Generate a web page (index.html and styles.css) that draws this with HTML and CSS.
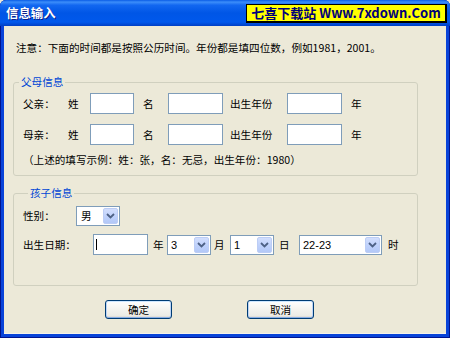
FILE: index.html
```html
<!DOCTYPE html>
<html>
<head>
<meta charset="utf-8">
<title>信息输入</title>
<link rel="stylesheet" href="styles.css">
</head>
<body>
<div class="window">
  <div class="titlebar">
    <span class="title">信息输入</span>
    <span class="brand">七喜下载站 Www.7xdown.Com</span>
  </div>
  <div class="client">
    <p class="note">注意：下面的时间都是按照公历时间。年份都是填四位数，例如1981，2001。</p>

    <fieldset class="group g1">
      <legend>父母信息</legend>
      <div class="pgrid">
        <span class="lbl">父亲：</span>
        <span class="lbl">姓</span>
        <div class="field"></div>
        <span class="lbl pl9">名</span>
        <div class="field"></div>
        <span class="lbl pl7">出生年份</span>
        <div class="field"></div>
        <span class="lbl pl9">年</span>

        <span class="lbl">母亲：</span>
        <span class="lbl">姓</span>
        <div class="field"></div>
        <span class="lbl pl9">名</span>
        <div class="field"></div>
        <span class="lbl pl7">出生年份</span>
        <div class="field"></div>
        <span class="lbl pl9">年</span>
      </div>
      <p class="example">（上述的填写示例：姓：张，名：无忌，出生年份：1980）</p>
    </fieldset>

    <fieldset class="group g2">
      <legend>孩子信息</legend>
      <div class="crow">
        <span class="lbl w-sex">性别：</span>
        <div class="combo w44"><span class="val cjk">男</span><span class="dd"><svg width="9" height="6" viewBox="0 0 9 6"><polyline points="1,1 4.5,4.5 8,1" fill="none" stroke="#4D6185" stroke-width="1.8"/></svg></span></div>
      </div>
      <div class="crow r2">
        <span class="lbl w-birth">出生日期：</span>
        <div class="field"><span class="caret"></span></div>
        <span class="lbl w-nian">年</span>
        <div class="combo w44"><span class="val">3</span><span class="dd"><svg width="9" height="6" viewBox="0 0 9 6"><polyline points="1,1 4.5,4.5 8,1" fill="none" stroke="#4D6185" stroke-width="1.8"/></svg></span></div>
        <span class="lbl w-yue">月</span>
        <div class="combo w44"><span class="val">1</span><span class="dd"><svg width="9" height="6" viewBox="0 0 9 6"><polyline points="1,1 4.5,4.5 8,1" fill="none" stroke="#4D6185" stroke-width="1.8"/></svg></span></div>
        <span class="lbl w-ri">日</span>
        <div class="combo w83"><span class="val">22-23</span><span class="dd"><svg width="9" height="6" viewBox="0 0 9 6"><polyline points="1,1 4.5,4.5 8,1" fill="none" stroke="#4D6185" stroke-width="1.8"/></svg></span></div>
        <span class="lbl w-shi">时</span>
      </div>
    </fieldset>

    <div class="buttons">
      <button class="btn ok">确定</button>
      <button class="btn cancel">取消</button>
    </div>
  </div>
</div>
</body>
</html>
```

FILE: styles.css
```css
* { box-sizing: border-box; }
html, body {
  margin: 0;
  padding: 0;
  background: #ECE9D8;
}
body {
  font-family: "Noto Sans CJK SC", "Liberation Sans", sans-serif;
  font-size: 10.6px;
  color: #000;
}
.window {
  width: 450px;
  height: 338px;
  display: flex;
  flex-direction: column;
  background: #0843D9;
  border-radius: 6px 6px 0 0;
  box-shadow: inset 0 0 0 1px #00148E;
  overflow: hidden;
}
.titlebar {
  height: 26px;
  flex: none;
  display: flex;
  align-items: center;
  padding-left: 6px;
  background: linear-gradient(to bottom, #0A5CE6 0%, #3C8EFA 8%, #1267F0 20%, #0056E6 50%, #0058EC 85%, #003FC4 100%);
}
.title {
  color: #fff;
  font-weight: bold;
  font-size: 12.4px;
  text-shadow: 1px 1px 0 #0A1E8A;
}
.brand {
  margin-left: auto;
  margin-right: 3px;
  width: 201px;
  height: 19px;
  background: #FFFF00;
  border: 1px solid #000;
  border-right-width: 2px;
  border-bottom-width: 2px;
  color: #00007A;
  font-weight: bold;
  font-size: 13px;
  line-height: 16px;
  text-align: center;
  white-space: nowrap;
}
.client {
  flex: 1;
  margin: 0 4px 4px 4px;
  background: #ECE9D8;
  border-bottom: 1px solid #F4F2EA;
  display: flex;
  flex-direction: column;
}
.note {
  margin: 15px 0 0 12px;
  line-height: 14px;
  white-space: nowrap;
}
.group {
  margin: 20px 0 0 9px;
  width: 405px;
  border: 1px solid #D0D0BF;
  border-radius: 3px;
  padding: 0;
}
.group legend {
  margin-left: 5px;
  padding: 0 2px;
  color: #0046D5;
  line-height: 14px;
}
.g1 { padding: 4px 0 8px 0; }
.pgrid {
  display: grid;
  grid-template-columns: 45px 22px 44px 34px 55px 64px 55px auto;
  grid-auto-rows: 21px;
  row-gap: 10px;
  align-items: center;
  padding-left: 9px;
}
.lbl {
  line-height: 14px;
  white-space: nowrap;
}
.pl9 { padding-left: 9px; }
.pl7 { padding-left: 7px; }
.field {
  height: 21px;
  width: 100%;
  background: #fff;
  border: 1px solid #7F9DB9;
  display: flex;
  align-items: center;
}
.example {
  margin: 8px 0 0 9px;
  line-height: 14px;
  white-space: nowrap;
}
.g2 {
  margin-top: 10px;
  padding: 6px 0 30px 9px;
}
.crow {
  display: flex;
  align-items: center;
  height: 20px;
}
.crow.r2 {
  margin-top: 8px;
  height: 21px;
}
.w-sex { width: 53px; }
.w-birth { width: 70px; }
.crow .field { width: 55px; }
.w-nian { width: 19px; padding-left: 5px; }
.w-yue { width: 19px; padding-left: 3px; }
.w-ri { width: 25px; padding-left: 5px; }
.w-shi { padding-left: 6px; }
.caret {
  width: 1px;
  height: 11px;
  margin-left: 2px;
  background: #000;
}
.combo {
  height: 20px;
  background: #fff;
  border: 1px solid #7F9DB9;
  display: flex;
  align-items: stretch;
  padding: 1px;
}
.w44 { width: 44px; }
.w83 { width: 83px; }
.combo .val {
  flex: 1;
  padding-left: 2px;
  font-family: "Liberation Sans", sans-serif;
  font-size: 11px;
  line-height: 16px;
}
.combo .val.cjk {
  font-family: "Noto Sans CJK SC", sans-serif;
  font-size: 10.6px;
  padding-left: 3px;
}
.combo .dd {
  width: 15px;
  border-radius: 2px;
  background: linear-gradient(to bottom, #D2DEFD 0%, #BDD0FB 60%, #B3C8F7 100%);
  border: 1px solid #BCCDF5;
  display: flex;
  align-items: center;
  justify-content: center;
}
.buttons {
  display: flex;
  margin-top: 14px;
  padding-left: 101px;
}
.btn {
  width: 67px;
  height: 19px;
  padding: 0;
  font-family: "Noto Sans CJK SC", sans-serif;
  font-size: 10.6px;
  line-height: 14px;
  color: #000;
  border: 1px solid #003C74;
  border-radius: 3px;
  background: linear-gradient(to bottom, #FFFFFF 0%, #F4F3EE 50%, #ECEBE6 85%, #D6D0C5 100%);
  box-shadow: inset 0 1px 0 #CEE7FF, inset 0 -1px 0 #89ADE4, inset 1px 0 0 #BCD4F6, inset -1px 0 0 #BCD4F6;
}
.cancel { margin-left: 75px; }
```
